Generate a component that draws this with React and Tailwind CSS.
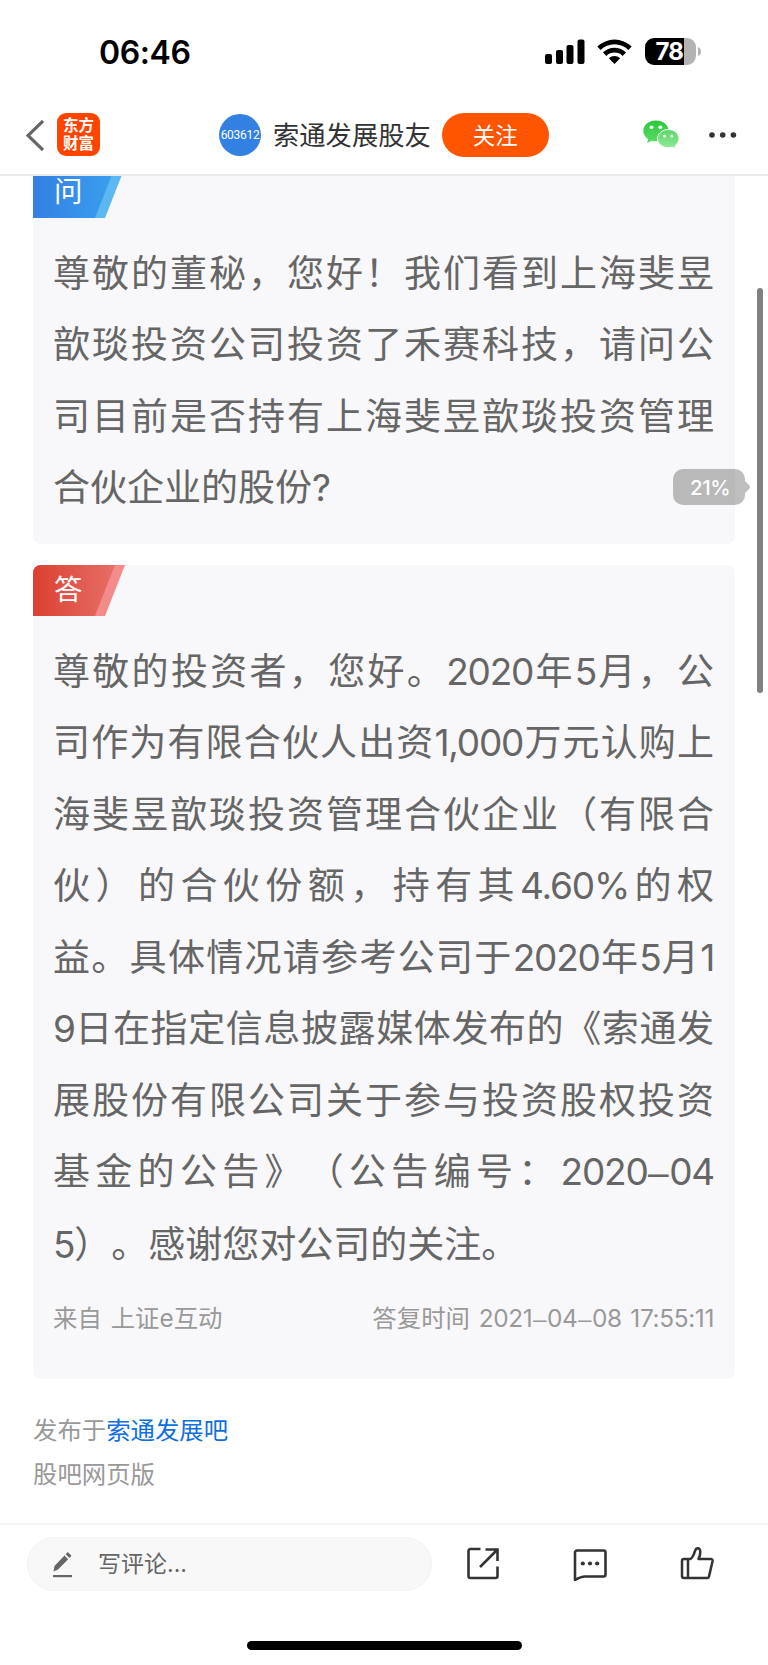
const QUESTION = [
    "尊敬的董秘，您好！我们看到上海斐昱",
    "歆琰投资公司投资了禾赛科技，请问公",
    "司目前是否持有上海斐昱歆琰投资管理",
    "合伙企业的股份?",
];

const ANSWER = [
    "尊敬的投资者，您好。2020年5月，公",
    "司作为有限合伙人出资1,000万元认购上",
    "海斐昱歆琰投资管理合伙企业（有限合",
    "伙）的合伙份额，持有其4.60%的权",
    "益。具体情况请参考公司于2020年5月1",
    "9日在指定信息披露媒体发布的《索通发",
    "展股份有限公司关于参与投资股权投资",
    "基金的公告》（公告编号：2020–04",
    "5）。感谢您对公司的关注。",
];

function StatusBar() {
    return (
        <div className="flex h-[94px] shrink-0 items-start justify-between pl-[99px] pr-[67px]">
            <div className="mt-[33px] text-[32px] leading-10 font-semibold tracking-[-0.400px] text-black">
                06:46
            </div>
            <div className="mt-[38px] flex items-start">
                <svg width="40" height="27" viewBox="0 0 40 27" className="mr-3">
                    <rect x="0" y="16" width="7" height="10" rx="2" />
                    <rect x="11" y="12" width="7" height="14" rx="2" />
                    <rect x="21.5" y="7" width="7" height="19" rx="2" />
                    <rect x="32.5" y="1.5" width="7" height="24.5" rx="2" />
                </svg>
                <svg width="35" height="27" viewBox="0 0 35 27" className="mr-[13px]">
                    <path d="M0.3 8.6a24.6 24.6 0 0 1 34.4 0l-3.3 3.5a19.6 19.6 0 0 0-27.8 0z" />
                    <path d="M6 14.4a16.4 16.4 0 0 1 23 0l-3.4 3.5a11.6 11.6 0 0 0-16.2 0z" />
                    <path d="M11.8 20.2a8.2 8.2 0 0 1 11.4 0L17.5 26z" />
                </svg>
                <div className="flex items-center gap-[2px]">
                    <div className="flex h-[27px] w-[51px] items-center overflow-hidden rounded-[9px] bg-[linear-gradient(to_right,#000_39.5px,#b3b3b3_39.5px)] pl-[10.500px] text-[24px] leading-none font-bold tracking-[-0.800px] text-white">
                        78
                    </div>
                    <svg width="3" height="9" viewBox="0 0 3 9">
                        <path d="M0 0c4 1.500 4 7.500 0 9z" fill="#b3b3b3" />
                    </svg>
                </div>
            </div>
        </div>
    );
}

function WechatIcon() {
    return (
        <svg width="37" height="30" viewBox="0 0 37 30">
            <defs>
                <linearGradient id="wechat" x1="0" y1="0" x2="0" y2="1">
                    <stop offset="0" stopColor="#28c93b" />
                    <stop offset="1" stopColor="#5edb68" />
                </linearGradient>
                <linearGradient id="wechatSmall" x1="0" y1="0" x2="0" y2="1">
                    <stop offset="0" stopColor="#58d865" />
                    <stop offset="1" stopColor="#93e99a" />
                </linearGradient>
            </defs>
            <path
                d="M13 0.500C5.900 0.500 0.300 5.100 0.300 11c0 3.400 1.900 6.200 4.900 8.200L4 23.200l4.700-2.500c1.400.4 2.800.6 4.300.6 7.100 0 12.700-4.700 12.700-10.500S20.100.500 13 .500z"
                fill="url(#wechat)"
            />
            <path
                d="M25.300 9.500c6 0 10.700 4 10.700 9.200 0 2.900-1.500 5.300-3.900 7l.9 3.300-3.800-1.900c-1.200.4-2.500.6-3.900.6-6 0-10.800-4-10.800-9s4.800-9.200 10.800-9.200z"
                fill="url(#wechatSmall)"
                stroke="#fff"
                strokeWidth="1"
            />
            <circle cx="8.500" cy="7.300" r="1.900" fill="#fff" />
            <circle cx="17.300" cy="7.300" r="1.900" fill="#fff" />
            <circle cx="21.600" cy="16" r="1.500" fill="#fff" />
            <circle cx="28.800" cy="16" r="1.500" fill="#fff" />
        </svg>
    );
}

function Header() {
    return (
        <header className="flex h-[82px] shrink-0 items-center border-b-2 border-[#ebebeb] pt-[2px] pl-[26px] pr-[31px]">
            <svg width="18" height="31" viewBox="0 0 18 31" fill="none" stroke="#666" strokeWidth="3.200">
                <path d="M17 1L2 15.500L17 30" />
            </svg>
            <div className="-mt-px ml-[13px] flex h-[43px] w-[43px] flex-col items-center justify-center rounded-[9px] bg-[#ff4400] pt-px text-[15.500px] leading-[18px] font-bold text-white">
                <span>东方</span>
                <span>财富</span>
            </div>
            <div className="ml-[119px] flex h-[42px] w-[42px] items-center justify-center rounded-full bg-[#3380e3] font-['Roboto',sans-serif] text-[12px] tracking-[-0.300px] text-white">
                <span className="-mt-px scale-y-110">603612</span>
            </div>
            <span className="ml-[12px] pt-[2px] text-[26.300px] leading-10 whitespace-nowrap text-[#333]">
                索通发展股友
            </span>
            <button className="ml-[11px] h-11 w-[107px] rounded-full bg-[#ff5500] pt-px text-[22.500px] text-white">
                关注
            </button>
            <div className="ml-auto flex items-center gap-[29px]">
                <WechatIcon />
                <svg width="28" height="6" viewBox="0 0 28 6" fill="#333">
                    <circle cx="3" cy="3" r="2.800" />
                    <circle cx="13.700" cy="3" r="2.800" />
                    <circle cx="24.400" cy="3" r="2.800" />
                </svg>
            </div>
        </header>
    );
}

function Ribbon({ label, type }) {
    const isQuestion = type === "question";
    return (
        <div className="grid h-[51px] w-[92px]">
            <svg width="92" height="51" viewBox="0 0 92 51" className="col-start-1 row-start-1">
                <defs>
                    <linearGradient id={type} x1="0" y1="0" x2="1" y2="0">
                        <stop offset="0" stopColor={isQuestion ? "#3480e3" : "#dc4031"} />
                        <stop offset="1" stopColor={isQuestion ? "#3a9fee" : "#e66e66"} />
                    </linearGradient>
                </defs>
                <path d="M8 0H92L72 51H0V8a8 8 0 0 1 8-8z" fill={isQuestion ? "#5cb8f0" : "#f48b8b"} />
                <path d="M8 0H82L62 51H0V8a8 8 0 0 1 8-8z" fill={`url(#${type})`} />
            </svg>
            <span className="col-start-1 row-start-1 pl-[21px] text-[28.500px] leading-[49px] text-white">
                {label}
            </span>
        </div>
    );
}

function Dash() {
    return <span className="mx-[0.500px] font-['Liberation_Sans',sans-serif] tracking-normal">–</span>;
}

// every line but the last is stretched to both edges
function Lines({ lines }) {
    return (
        <div className="mt-[19.500px] pr-[21px] pl-5 text-[37px] leading-[71.500px] text-[#666]">
            {lines.map((line, i) => (
                <p
                    key={line}
                    className={
                        i < lines.length - 1
                            ? "[text-align-last:justify] whitespace-nowrap"
                            : "whitespace-nowrap"
                    }
                >
                    {line.split(/([\d,.%?]+|–)/).map((part, j) => {
                        if (part === "–") return <Dash key={j} />;
                        return j % 2 ? (
                            <span key={j} className="tracking-[-1.200px]">
                                {part}
                            </span>
                        ) : (
                            part
                        );
                    })}
                </p>
            ))}
        </div>
    );
}

function Toolbar() {
    return (
        <footer className="flex h-[142px] shrink-0 flex-col border-t-2 border-[#f7f7f7] bg-white">
            <div className="mt-3 flex h-[54px] items-center pl-[27px]">
                <div className="flex h-[54px] w-[405px] items-center rounded-full border border-[#f3f3f3] bg-[#f8f8f8] pl-[25px] text-[23px] text-[#666]">
                    <svg width="20" height="27" viewBox="0 0 20 27" fill="#666" className="mr-[25px]">
                        <path d="M0.500 20.500L1.500 15L11.500 4.500L15.200 8.200L5 18.500zM12.700 3.200L14.700 1L18.500 4.700L16.400 6.900z" />
                        <rect x="0" y="24" width="19" height="2.200" />
                    </svg>
                    写评论...
                </div>
                <svg width="34" height="34" viewBox="0 0 34 34" fill="none" stroke="#333" strokeWidth="2.600" className="ml-[34px]">
                    <path d="M14.500 2H4.500a2 2 0 0 0-2 2V29a2 2 0 0 0 2 2H29.500a2 2 0 0 0 2-2V19.500" />
                    <path d="M19.500 2.500H31.500V14M31.500 2.500L14 20" />
                </svg>
                <svg width="34" height="34" viewBox="0 0 34 34" fill="none" stroke="#333" strokeWidth="2.600" className="ml-[73px]">
                    <path d="M2 33V5.500a2 2 0 0 1 2-2H30.500a2 2 0 0 1 2 2V27.500a2 2 0 0 1-2 2H12Q8 29.500 2 33z" strokeLinejoin="round" />
                    <g fill="#333" stroke="none">
                        <circle cx="9.800" cy="16.500" r="2.100" />
                        <circle cx="17" cy="16.500" r="2.100" />
                        <circle cx="24.200" cy="16.500" r="2.100" />
                    </g>
                </svg>
                <svg width="34" height="34" viewBox="0 0 34 34" fill="none" stroke="#333" strokeWidth="2.500" strokeLinejoin="round" className="ml-[73px]">
                    <path d="M10 12H4a2 2 0 0 0-2 2V29a2 2 0 0 0 2 2H27a2 2 0 0 0 2-1.600L32.600 14a1.800 1.800 0 0 0-1.800-2H18.500C21 7 21 1.300 17.800 1.300C14.800 1.300 15.300 4.500 13.500 8C12.500 10 11.500 12 10 12z" />
                    <path d="M8 12V31" />
                </svg>
            </div>
            <div className="mx-auto mt-[50px] h-[9px] w-[275px] rounded-full bg-black" />
        </footer>
    );
}

export default function App() {
    return (
        <div className="relative flex h-[1665px] w-[768px] flex-col overflow-hidden bg-white font-['Inter','Noto_Sans_CJK_SC',sans-serif] [text-spacing-trim:space-all]">
            <StatusBar />
            <Header />
            <main className="min-h-0 flex-1 overflow-hidden px-[33px]">
                <section className="-mt-[9px] h-[377px] rounded-lg bg-[#f8f8fa]">
                    <Ribbon label="问" type="question" />
                    <Lines lines={QUESTION} />
                </section>
                <section className="mt-[21px] h-[814px] rounded-lg bg-[#f8f8fa]">
                    <Ribbon label="答" type="answer" />
                    <Lines lines={ANSWER} />
                    <div className="mt-5 flex justify-between pr-[21px] pl-5 text-[24.400px] leading-9 text-[#999]">
                        <span className="[word-spacing:2px]">来自 上证e互动</span>
                        <span className="[word-spacing:2px]">
                            答复时间 <span className="tracking-[-0.350px]">2021<Dash />04<Dash />08 17:55:11</span>
                        </span>
                    </div>
                </section>
                <div className="mt-[29px] text-[24.400px] leading-[44px] text-[#999]">
                    <p>
                        发布于<a className="text-[#0f6fe0]">索通发展吧</a>
                    </p>
                    <p>股吧网页版</p>
                </div>
            </main>
            <Toolbar />

            {/* scroll position */}
            <div className="absolute top-[288px] right-[5px] h-[405px] w-[6px] rounded-full bg-[#808080]" />
            <div className="absolute top-[469px] right-[18px] flex items-center opacity-25">
                <div className="h-9 w-[72px] rounded-[10px] bg-black" />
                <svg width="5" height="12" viewBox="0 0 5 12">
                    <path d="M0 0L4 4a2.500 2.500 0 0 1 0 4L0 12z" />
                </svg>
            </div>
            <div className="absolute top-[470px] right-[23px] w-[72px] pl-[17px] text-[20.500px] leading-9 font-medium tracking-[-0.500px] text-white">
                21%
            </div>
        </div>
    );
}
